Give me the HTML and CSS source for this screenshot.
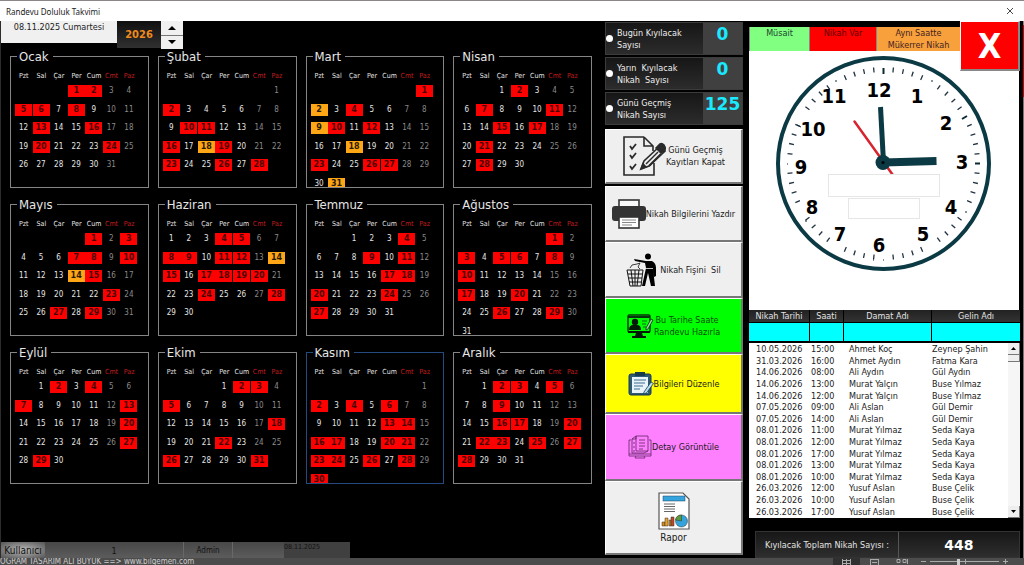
FILE: index.html
```html
<!DOCTYPE html>
<html lang="tr">
<head>
<meta charset="utf-8">
<title>Randevu Doluluk Takvimi</title>
<link rel="stylesheet" href="styles.css">
</head>
<body>
<div class="window">
  <header class="titlebar">
    <h1 class="titlebar-text">Randevu Doluluk Takvimi</h1>
    <button class="titlebar-close" aria-label="Kapat"><svg width="8" height="8" viewBox="0 0 8 8"><path d="M1 1l6 6M7 1L1 7" stroke="#333" stroke-width="0.9"/></svg></button>
  </header>

  <main class="workspace">
    <section class="calendar-side">
      <div class="toolbar">
        <div class="today">08.11.2025 Cumartesi</div>
        <input class="year" type="text" value="2026" aria-label="Yıl">
        <div class="spinner">
          <button aria-label="Sonraki yıl"><svg width="8" height="4" viewBox="0 0 8 4"><path d="M0 4L4 0l4 4z"/></svg></button>
          <button aria-label="Önceki yıl"><svg width="8" height="4" viewBox="0 0 8 4"><path d="M0 0l4 4 4-4z"/></svg></button>
        </div>
      </div>
      <div class="months" id="months"></div>
      <footer class="userbar">
        <span class="user-label">Kullanıcı</span>
        <span class="user-id">1</span>
        <span class="user-name">Admin</span>
        <span class="user-blank"></span>
        <span class="user-date">08.11.2025</span>
      </footer>
    </section>

    <section class="actions">
      <div class="stats">
        <label class="stat"><input type="radio" name="stat"><span class="stat-text">Bugün Kıyılacak<br>Sayısı</span><b class="stat-value">0</b></label>
        <label class="stat"><input type="radio" name="stat"><span class="stat-text">Yarın&nbsp; Kıyılacak<br>Nikah&nbsp; Sayısı</span><b class="stat-value">0</b></label>
        <label class="stat"><input type="radio" name="stat"><span class="stat-text">Günü Geçmiş<br>Nikah Sayısı</span><b class="stat-value">125</b></label>
      </div>
      <button class="action action-first">
        <svg width="44" height="42" viewBox="0 0 44 42" fill="none" stroke="#2a2a2a" stroke-width="1.6">
          <path d="M22 2H2v38h30V28M22 2l9 9v5M22 2v9h9"/>
          <path d="M8 11l2 3 4-5M8 20l2 3 4-5M8 31l2 3 4-5" stroke-width="1.8"/>
          <path d="M19 34l3-8L38 11l5 5-16 15z" fill="#efefef"/>
          <path d="M34 13l4-4q2-1 4 1l1 2q1 2-1 4l-3 2z" fill="#2a2a2a"/>
          <path d="M24 29L36 17" stroke-width="1.4"/><path d="M27 31L39 19" stroke-width="2"/><path d="M19 34l5-2-3-3z" fill="#2a2a2a"/>
        </svg>
        <span>Günü Geçmiş<br>Kayıtları Kapat</span>
      </button>
      <button class="action">
        <svg width="34" height="30" viewBox="0 0 34 30">
          <rect x="7" y="1" width="20" height="9" fill="#f8f8f8" stroke="#333" stroke-width="1.6"/>
          <rect x="0" y="7" width="34" height="15" rx="3" fill="#333"/>
          <rect x="7" y="18" width="20" height="11" fill="#fff" stroke="#333" stroke-width="1.6"/>
          <path d="M10 21h14M10 23.500h14M10 26h10" stroke="#888" stroke-width="1.200"/>
        </svg>
        <span>Nikah Bilgilerini Yazdır</span>
      </button>
      <button class="action action-delete">
        <svg width="31" height="34" viewBox="0 0 31 34">
          <g fill="none" stroke="#111"><path d="M1 17h16l-2 16H4zM2 21h14M3 25h13M3 29h12M5 17l2 16M9 17v16M13 17l-2 16" stroke-width="1"/>
          <path d="M4 15l2-3 5-1 3-1-2 4 2 2" stroke-width=".8"/></g>
          <circle cx="22" cy="3.500" r="3"/>
          <path d="M8 6l12 2h6q4 2 4 7v8l-2 1-1-8 2 17h-4l-3-13-3 13h-3l4-18-1-5-10-2z"/>
          <path d="M19 15.500h8" stroke="#efefef" stroke-width=".8"/>
        </svg>
        <span>Nikah Fişini&nbsp; Sil</span>
      </button>
      <button class="action green">
        <svg width="27" height="24" viewBox="0 0 27 24">
          <rect x="1" y="1" width="22" height="17" rx="1.500" fill="none" stroke="#06340c" stroke-width="1.500"/>
          <path d="M1 3h22" stroke="#06340c" stroke-width="2"/>
          <circle cx="8" cy="8" r="3.200" fill="#031a06"/><path d="M2 16q0-5 4-5h4q4 0 4 5z" fill="#031a06"/>
          <path d="M15 7h5M15 10h4M16 13h3" stroke="#0a6b18"/>
          <path d="M1 17h22v2H1zM9 19h6l1 3h3v2H5v-2h3z" fill="#031a06"/>
          <path d="M19 14l5-9 2 1-5 9-2 1z" fill="#9fd8a8" stroke="#06340c" stroke-width=".8"/>
        </svg>
        <span>Bu Tarihe Saate<br>Randevu Hazırla</span>
      </button>
      <button class="action yellow">
        <svg width="26" height="24" viewBox="0 0 26 24">
          <rect x="1" y="2" width="22" height="21" rx="2" fill="#2d5a78" stroke="#173a4c"/>
          <rect x="4" y="5" width="16" height="16" fill="#e8f4fa"/>
          <path d="M7 0h10v4H7z" fill="#173a4c"/>
          <path d="M6 8h12M6 11h11M6 14h9M6 17h6" stroke="#3f6f8e" stroke-width="1.200"/>
          <path d="M16 20l7-10 2.500 1.500-7 9.500-3 1z" fill="#b9dff2" stroke="#173a4c" stroke-width=".8"/>
        </svg>
        <span>Bilgileri Düzenle</span>
      </button>
      <button class="action pink">
        <svg width="24" height="24" viewBox="0 0 24 24" fill="none" stroke="#6d2f74" stroke-width=".9">
          <path d="M3 5H1v16h22V5h-2M1 19h22M8 21l-1 2h10l-1-2"/>
          <path d="M8 1h12v15H8zM8 1L4 4v14h12l4-2M8 1v3H4"/>
          <path d="M11 5h6M11 8h6M11 11h6M11 14h4M6 7v2M6 11v2M6 15v2"/>
        </svg>
        <span>Detay Görüntüle</span>
      </button>
      <button class="action report">
        <svg width="32" height="38" viewBox="0 0 32 38">
          <path d="M1 1h24l6 6v30H1z" fill="#fff" stroke="#555" stroke-width="1.200"/>
          <rect x="5" y="4" width="22" height="5" fill="#35a3dc" stroke="#246" stroke-width=".5"/>
          <path d="M6 12h11M6 14.500h11M6 17h11M6 19.500h11" stroke="#666" stroke-width="1"/>
          <g stroke="#333" stroke-width=".5"><path d="M4 30h3v4H4zM11 28h2v6h-2z" fill="#d58a1e"/><path d="M7 26h3v8H7z" fill="#e5a42c"/><path d="M13 25h3v9h-3z" fill="#bd4a26"/>
          <circle cx="23.500" cy="29" r="6" fill="#35a3dc"/><path d="M23.500 29v-6a6 6 0 0 0-6 5z" fill="#5b9b3a"/></g>
        </svg>
        <span>Rapor</span>
      </button>
    </section>

    <section class="bookings">
      <div class="legend-row">
        <span class="key key-free">Müsait</span>
        <span class="key key-busy">Nikah Var</span>
        <span class="key key-double">Aynı Saatte<br>Mükerrer Nikah</span>
        <button class="exit" aria-label="Çıkış">X</button>
      </div>
      <div class="clock">
        <svg class="clock-face" viewBox="0 0 270 259">
          <circle cx="134.500" cy="112.500" r="105.500" fill="none" stroke="#0b3a44" stroke-width="4"/>
          <circle cx="134.500" cy="112.500" r="94" fill="none" stroke="#234" stroke-width="5" pathLength="360" stroke-dasharray="0 5.600 0.800 5.200 0.800 5.200 0.800 5.200 0.800 5.600"/>
          <g stroke="#0b2a34" stroke-width="2">
            <path d="M134.500 17v6M226 112.500h5M213 68l5-3"/>
            <path d="M216 161h2M124 209h1M134 209h1M38 113h1M48 74l4 2M86 30h2M182 30h2M56 170h2" stroke-width="1"/>
          </g>
          <g class="numerals">
            <text x="130" y="46">12</text><text x="168" y="52">1</text><text x="197" y="79">2</text><text x="213" y="118">3</text>
            <text x="202" y="163">4</text><text x="174" y="190">5</text><text x="130" y="201">6</text><text x="91" y="190">7</text>
            <text x="63" y="163">8</text><text x="52" y="123">9</text><text x="64" y="85">10</text><text x="85" y="52">11</text>
          </g>
          <path d="M105.500 70.500l38 53" stroke="#d8242f" stroke-width="2.500" stroke-linecap="round"/>
          <path d="M134.500 111.500L131.500 56" stroke="#0b3a44" stroke-width="5"/>
          <path d="M134 111.500l53.500-1.500" stroke="#0b3a44" stroke-width="8"/>
          <circle cx="134" cy="111.500" r="7.500" fill="#0b3a44"/><circle cx="134" cy="111.500" r="1.500"/>
        </svg>
        <div class="clock-fields">
          <input class="field-wide" type="text" aria-label="Tarih">
          <input class="field-narrow" type="text" aria-label="Saat">
        </div>
      </div>
      <div class="filters">
        <label for="f1">Nikah Tarihi</label><label for="f2">Saati</label><label for="f3">Damat Adı</label><label for="f4">Gelin Adı</label>
        <input id="f1" type="text"><input id="f2" type="text"><input id="f3" type="text"><input id="f4" type="text">
      </div>
      <div class="list">
        <table class="list-table">
          <colgroup><col class="c-date"><col class="c-time"><col class="c-groom"><col></colgroup>
          <tbody>
          <tr><td>10.05.2026</td><td>15:00</td><td>Ahmet Koç</td><td>Zeynep Şahin</td></tr>
          <tr><td>31.03.2026</td><td>16:00</td><td>Ahmet Aydın</td><td>Fatma Kara</td></tr>
          <tr><td>14.06.2026</td><td>08:00</td><td>Ali Aydın</td><td>Gül Aydın</td></tr>
          <tr><td>14.06.2026</td><td>13:00</td><td>Murat Yalçın</td><td>Buse Yılmaz</td></tr>
          <tr><td>14.06.2026</td><td>12:00</td><td>Murat Yalçın</td><td>Buse Yılmaz</td></tr>
          <tr><td>07.05.2026</td><td>09:00</td><td>Ali Aslan</td><td>Gül Demir</td></tr>
          <tr><td>07.05.2026</td><td>14:00</td><td>Ali Aslan</td><td>Gül Demir</td></tr>
          <tr><td>08.01.2026</td><td>11:00</td><td>Murat Yılmaz</td><td>Seda Kaya</td></tr>
          <tr><td>08.01.2026</td><td>12:00</td><td>Murat Yılmaz</td><td>Seda Kaya</td></tr>
          <tr><td>08.01.2026</td><td>17:00</td><td>Murat Yılmaz</td><td>Seda Kaya</td></tr>
          <tr><td>08.01.2026</td><td>13:00</td><td>Murat Yılmaz</td><td>Seda Kaya</td></tr>
          <tr><td>08.01.2026</td><td>10:00</td><td>Murat Yılmaz</td><td>Seda Kaya</td></tr>
          <tr><td>26.03.2026</td><td>12:00</td><td>Yusuf Aslan</td><td>Buse Çelik</td></tr>
          <tr><td>26.03.2026</td><td>10:00</td><td>Yusuf Aslan</td><td>Buse Çelik</td></tr>
          <tr><td>26.03.2026</td><td>17:00</td><td>Yusuf Aslan</td><td>Buse Çelik</td></tr>
          </tbody>
        </table>
        <div class="scrollbar">
          <button aria-label="Yukarı"><svg width="5" height="3" viewBox="0 0 5 3"><path d="M0 3L2.500 0 5 3z"/></svg></button>
          <span class="thumb"></span>
          <button class="down" aria-label="Aşağı"><svg width="5" height="3" viewBox="0 0 5 3"><path d="M0 0l2.500 3L5 0z"/></svg></button>
        </div>
      </div>
      <div class="total">
        <span class="total-label">Kıyılacak Toplam Nikah Sayısı :</span>
        <b class="total-value">448</b>
      </div>
    </section>
    <div class="edge"></div>
  </main>

  <footer class="statusbar">
    <span>OGRAM TASARIM ALİ BÜYÜK ==&gt; www.bilgemen.com</span>
    <svg class="status-icons" width="184" height="7" viewBox="0 0 184 7" fill="none" stroke="#aaa">
      <rect x="0" y="0" width="27" height="7" fill="#303030" stroke="none"/>
      <path d="M9 2.500h9M9 5.500h9M9.500 1v6M13.500 1v6M17.500 1v6M37 1.500h9M37.500 1v6M45.500 1v6M39 4.500h5M64 1.500h3v3h-3zM70 1.500h3v3h-3zM74.500 1v5M88 3.500h5M97 3.500h69M170 3.500h5M172.500 1v5M132.500 1v5"/>
      <rect x="124" y="1" width="3" height="6" fill="#ccc" stroke="none"/>
    </svg>
  </footer>
</div>
<script src="calendar.js"></script>
</body>
</html>
```
FILE: styles.css
```css
* { box-sizing: border-box; }

body {
  margin: 0;
  background: #000;
  color: #000;
  font-family: "DejaVu Sans Condensed", "DejaVu Sans", sans-serif;
  font-size: 9px;
}

button, input { font: inherit; color: inherit; margin: 0; padding: 0; border: 0; border-radius: 0; }
svg { display: block; flex: none; }

.window { min-height: 100vh; display: flex; flex-direction: column; overflow: hidden; }

.titlebar {
  height: 21px;
  padding: 0 10px 0 6px;
  display: flex;
  align-items: center;
  justify-content: space-between;
  background: #fff;
  border-top: 1px solid #8a8588;
}
.titlebar-text { margin: 0; font: 400 8px "Noto Sans", sans-serif; color: #222; }
.titlebar-close { background: none; }

.workspace { flex: 1; display: grid; grid-template-columns: 604fr 145fr 273fr 2px; }

/* calendar */
.calendar-side { display: flex; flex-direction: column; border-left: 1px solid #2c2c2c; }
.toolbar { display: flex; align-items: flex-start; height: 28px; }
.today { width: 116px; height: 22px; background: #f0f0f0; text-align: center; line-height: 13px; color: #222; }
.year {
  width: 44px; height: 27px;
  background: linear-gradient(#101010, #303030);
  color: #f08a1c; font-size: 11px; font-weight: 700; text-align: center;
}
.spinner { width: 22px; height: 28px; display: grid; gap: 1px; background: #777; }
.spinner button { background: #f0f0f0; display: grid; place-items: center; }

.months { padding: 0 12px 0 9px; display: grid; grid-template-columns: repeat(4, 1fr); gap: 9px; }
.month {
  min-width: 0; height: 139px; margin: 0; padding: 0 0 0 4px;
  border: 1px solid #858585; overflow: hidden; color: #e6e6e6;
}
.month.current { border-color: #244a80; }
.month legend { margin-left: 2px; padding: 0 4px 0 2px; font-size: 13px; line-height: 15px; }
.days { width: 123px; margin-top: 5px; border-collapse: collapse; table-layout: fixed; text-align: center; }
.days th, .days td { padding: 0; }
.days th { height: 13px; font-size: 7px; font-weight: 400; }
.days th.weekend { color: #c01c1c; }
.days td.weekend { color: #8a8a8a; }
.days td { height: 18px; font-size: 8px; line-height: 12px; }
.days tr:nth-child(even) td { height: 19px; }
.days td span { display: block; width: 17px; height: 12px; }
.days .busy span, .days .double span { font-family: "DejaVu Sans", sans-serif; font-weight: 700; }
.days .busy span { background: #f00; color: #4a0000; }
.days .double span { background: #ffa617; color: #2a1a00; }

.userbar {
  margin-top: auto; width: 349px; height: 16px; display: flex;
  background: linear-gradient(#474747, #5c5c5c);
  text-align: center; line-height: 18px; color: #111; overflow: hidden;
}
.user-label { width: 44px; font-size: 10px; background: radial-gradient(#b8b8b8, #555); }
.user-id { width: 138px; }
.user-name { width: 50px; font-size: 8px; border-left: 1px solid #686868; border-right: 1px solid #686868; }
.user-blank { width: 51px; }
.user-date { flex: 1; background: #404040; font-size: 7px; line-height: 11px; text-align: left; }

/* actions */
.actions {
  padding: 1px 6px 3px 1px; display: grid;
  grid-template-rows: 107px 57px 56px 56px 56px 60px 67px 1fr;
}
.stats { display: grid; grid-template-rows: repeat(3, 33px); gap: 2px; align-content: start; }
.stat {
  display: grid; grid-template-columns: 11px 1fr 39px; align-items: center;
  background: linear-gradient(#161616, #2c2c2c); border: 1px solid #3c3c3c; color: #eee; line-height: 12px;
  white-space: nowrap;
}
.stat input { appearance: none; width: 7px; height: 7px; border-radius: 50%; background: #fff; }
.stat-value { align-self: stretch; background: #404040; color: #19eaff; font-family: "DejaVu Sans", sans-serif; font-size: 17px; line-height: 23px; text-align: center; }
.action {
  display: flex; align-items: center; justify-content: center;
  background: #efefef; border: 1px solid #fff; border-right: 2px solid #777; border-bottom: 2px solid #777;
  color: #1a1a1a; line-height: 12px; white-space: nowrap;
}
.action-first { margin-bottom: 2px; }
.action-delete { gap: 3px; }
.green { background: #0f0; color: #064d06; }
.yellow { background: #ff0; }
.pink { background: #ff80ff; }
.report { flex-direction: column; font-size: 10px; gap: 2px; }

/* bookings */
.bookings { display: flex; flex-direction: column; padding-top: 6px; }
.legend-row { position: relative; display: grid; grid-template-columns: 60fr 67fr 84fr 62fr; height: 24px; }
.key { line-height: 12px; text-align: center; border-left: 1px solid #888; border-bottom: 1px solid #999; white-space: nowrap; }
.key-free { background: #80ff80; color: #243; }
.key-busy { background: #f00; color: #5c0000; }
.key-double { background: #f7a03c; color: #422; }
.exit {
  position: absolute; z-index: 1; top: -6px; right: 2px; width: 60px; height: 50px;
  background: #f00; border: 1px solid #fff; border-right: 2px solid #888; border-bottom: 2px solid #888;
  color: #fff; font-size: 34px; font-weight: 700; line-height: 46px;
}
.clock { position: relative; margin-right: 3px; background: #fff; }
.clock-face { width: 100%; }
.numerals { font-size: 20px; font-weight: 700; text-anchor: middle; }
.clock-fields { position: absolute; top: 123px; left: 0; width: 100%; display: grid; gap: 1px; justify-items: center; }
.clock-fields input { background: #fff; border: 1px solid #e6e6e6; }
.field-wide { width: 112px; height: 23px; }
.field-narrow { width: 72px; height: 21px; }
.filters { margin-right: 2px; display: grid; grid-template-columns: 60fr 33fr 87fr 88fr; grid-template-rows: 12px 18px; gap: 1px; }
.filters label { background: linear-gradient(#222, #333); color: #e2e2e2; line-height: 12px; text-align: center; }
.filters input { min-width: 0; width: 100%; background: #0ff; }
.list { margin: 2px 2px 0 0; display: flex; background: #fff; }
.list-table { flex: 1; height: 174px; margin-top: 1px; border-collapse: collapse; table-layout: fixed; color: #222; white-space: nowrap; }
.list-table td { padding: 0; line-height: 11px; }
.list-table td:first-child { padding-left: 7px; }
.c-date { width: 62px; }
.c-time { width: 38px; }
.c-groom { width: 83px; }
.scrollbar { width: 12px; display: flex; flex-direction: column; background: #f6f6f6; }
.scrollbar button { height: 12px; display: grid; place-items: center; background: #eee; border-right: 1px solid #777; border-bottom: 1px solid #777; }
.thumb { height: 7px; background: #eee; border-right: 1px solid #777; border-bottom: 1px solid #777; }
.scrollbar .down { margin-top: auto; }
.total { margin: auto 2px 0 6px; height: 27px; display: grid; grid-template-columns: 144fr 121fr; background: linear-gradient(#171717, #2e2e2e); border: 1px solid #333; color: #e2e2e2; line-height: 26px; text-align: center; }
.total-label { border-right: 1px solid #555; white-space: nowrap; }
.total-value { font-family: "DejaVu Sans", sans-serif; font-size: 14px; color: #fff; }
.edge { border-left: 1px solid #000; background: linear-gradient(#888 4px, #d00000 4px, #d00000 76px, #777 76px); }

.statusbar { height: 7px; padding-right: 7px; display: flex; justify-content: space-between; background: #4c4c4c; color: #ccc; font-size: 8px; line-height: 8px; overflow: hidden; white-space: nowrap; }
```
FILE: calendar.js
```js
// offset: empty cells before day 1 (week starts on Monday)
const months = [
  { name: "Ocak", offset: 3, length: 31, busy: [1, 2, 5, 6, 8, 13, 16, 20, 24], double: [] },
  { name: "Şubat", offset: 6, length: 28, busy: [2, 10, 11, 16, 19, 23, 26, 28], double: [18] },
  { name: "Mart", offset: 6, length: 31, busy: [1, 4, 10, 12, 23, 26, 27], double: [2, 9, 18, 31] },
  { name: "Nisan", offset: 2, length: 30, busy: [2, 7, 11, 15, 17, 21, 28], double: [] },
  { name: "Mayıs", offset: 4, length: 31, busy: [1, 3, 7, 8, 10, 15, 23, 27, 29], double: [14] },
  { name: "Haziran", offset: 0, length: 30, busy: [4, 5, 8, 9, 11, 12, 15, 17, 18, 19, 20, 24, 28], double: [14] },
  { name: "Temmuz", offset: 2, length: 31, busy: [4, 9, 11, 17, 18, 20, 24, 27], double: [] },
  { name: "Ağustos", offset: 5, length: 31, busy: [1, 3, 5, 6, 8, 10, 17, 20, 26, 29], double: [] },
  { name: "Eylül", offset: 1, length: 30, busy: [2, 4, 7, 13, 20, 27, 29], double: [] },
  { name: "Ekim", offset: 3, length: 31, busy: [2, 3, 5, 18, 22, 26, 31], double: [] },
  { name: "Kasım", offset: 6, length: 30, busy: [2, 4, 6, 13, 14, 16, 17, 20, 21, 23, 24, 26, 28, 30], double: [], current: true },
  { name: "Aralık", offset: 1, length: 31, busy: [2, 3, 5, 9, 16, 17, 20, 22, 23, 25, 27, 28], double: [] }
];
const weekdays = ["Pzt", "Sal", "Çar", "Per", "Cum", "Cmt", "Paz"];

function renderMonth(month) {
  const head = weekdays
    .map((day, i) => `<th${i > 4 ? ' class="weekend"' : ""}>${day}</th>`)
    .join("");
  let rows = "";
  for (let week = 0; week < 6; week++) {
    rows += "<tr>";
    for (let col = 0; col < 7; col++) {
      const day = week * 7 + col - month.offset + 1;
      const valid = day > 0 && day <= month.length;
      const classes = [];
      if (col > 4) classes.push("weekend");
      if (month.busy.includes(day)) classes.push("busy");
      if (month.double.includes(day)) classes.push("double");
      rows += `<td class="${classes.join(" ")}">${valid ? `<span>${day}</span>` : ""}</td>`;
    }
    rows += "</tr>";
  }
  return `<fieldset class="month${month.current ? " current" : ""}"><legend>${month.name}</legend>
    <table class="days"><thead><tr>${head}</tr></thead><tbody>${rows}</tbody></table></fieldset>`;
}

document.getElementById("months").innerHTML = months.map(renderMonth).join("");
```
